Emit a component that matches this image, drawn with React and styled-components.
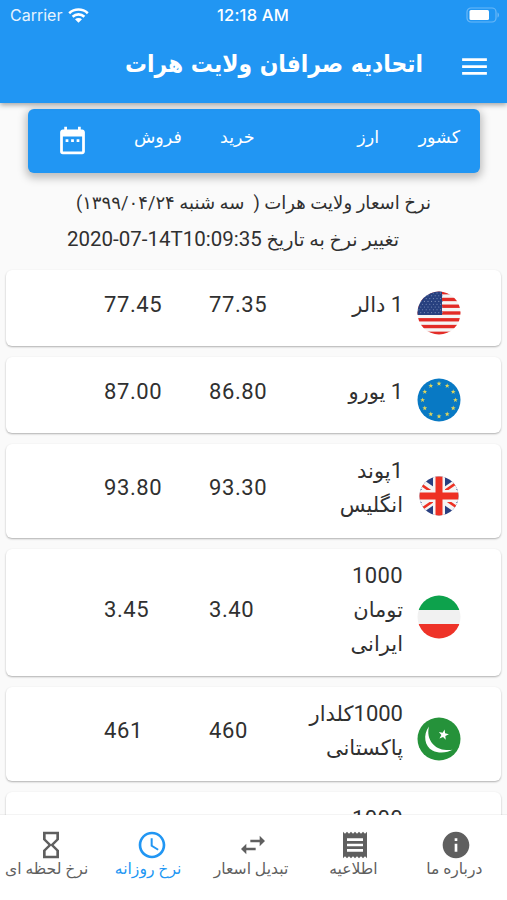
import styled, { createGlobalStyle } from "styled-components";
import {
  MdAccessTime,
  MdDateRange,
  MdHourglassEmpty,
  MdInfo,
  MdMenu,
  MdReceipt,
  MdSwapHoriz,
} from "react-icons/md";

const GlobalStyle = createGlobalStyle`
  * {
    box-sizing: border-box;
  }

  body {
    margin: 0;
    background-color: #fafafa;
    font-family: Roboto, "DejaVu Sans", sans-serif;
  }
`;

const Screen = styled.div`
  width: 507px;
  height: 900px;
  display: flex;
  flex-direction: column;
  overflow: hidden;
  background-color: #fafafa;
  color: #303030;
`;

const Top = styled.header`
  flex: none;
  height: 103px;
  background-color: #2196f3;
  color: #fff;
  box-shadow: 0 2px 5px rgba(0, 0, 0, 0.35);
  z-index: 1;
`;

const StatusBar = styled.div`
  height: 30px;
  padding: 0 7px 0 10px;
  display: grid;
  grid-template-columns: 207px 1fr auto;
  align-items: center;
  font-family: Inter, sans-serif;
  font-size: 16px;
`;

const Carrier = styled.div`
  display: flex;
  align-items: center;
  gap: 6px;
  color: #e6f3fe;
`;

const Clock = styled.div`
  font-size: 16.5px;
  font-weight: 500;
  letter-spacing: 0.2px;
`;

const AppBar = styled.div`
  height: 73px;
  padding-right: 16px;
  display: flex;
  align-items: center;
  justify-content: flex-end;
  gap: 35px;
`;

const Title = styled.h1`
  margin: 0;
  padding-bottom: 5px;
  font-family: "DejaVu Sans Condensed", "DejaVu Sans", sans-serif;
  font-size: 24.3px;
  font-stretch: condensed;
  font-weight: bold;
  line-height: 40px;
  white-space: nowrap;
`;

const List = styled.main`
  flex: 1;
  min-height: 0;
  overflow: hidden;
  display: flex;
  flex-direction: column;
`;

const HeadBar = styled.div`
  flex: none;
  height: 64px;
  margin: 6px 27px 0 28px;
  padding: 0 20px 0 28px;
  display: grid;
  grid-template-columns: 78px 86px 100px 59px 1fr;
  border-radius: 6px;
  background-color: #2196f3;
  color: #fff;
  box-shadow: 0 3px 9px 2px rgba(0, 0, 0, 0.25);

  svg {
    margin-top: 15px;
  }
`;

const HeadCell = styled.div`
  padding-top: 12px;
  font-size: 17.5px;
  line-height: 32px;
`;

const Info = styled.div`
  flex: none;
  height: 97px;
  padding-top: 12px;
  display: flex;
  flex-direction: column;
`;

const InfoLine = styled.p`
  margin: 0;
  padding-right: ${({ $right }) => $right}px;
  font-size: ${({ $size }) => $size}px;
  line-height: 36px;
  white-space: pre;
`;

const Latin = styled.bdi`
  font-size: 20.5px;
`;

const Card = styled.article`
  flex: none;
  min-height: 76px;
  margin: 0 6px 11px;
  padding: 10px 40.5px 15.5px 98px;
  display: grid;
  grid-template-columns: 105px 1fr 57.5px;
  align-items: center;
  border-radius: 6px;
  background-color: #fff;
  box-shadow: 0 1px 2px rgba(0, 0, 0, 0.3);
`;

const Price = styled.div`
  font-size: 22px;
  line-height: 34px;
  letter-spacing: 0.6px;
`;

const PriceName = styled.div`
  display: flex;
  justify-content: space-between;
  align-items: center;
`;

const Name = styled.div`
  font-size: 21px;
  line-height: 34px;
  text-align: right;
  white-space: pre;
`;

const NameLine = styled.div`
  height: 34px;
`;

const Amount = styled.span`
  font-size: 22px;
  letter-spacing: 0.4px;
`;

const Flag = styled.svg`
  justify-self: end;
  position: relative;
  top: 7.5px;
`;

const Nav = styled.nav`
  flex: none;
  height: 85px;
  padding-top: 14px;
  display: grid;
  grid-template-columns: repeat(5, 1fr);
  background-color: #fff;
  box-shadow: 0 0 1px rgba(0, 0, 0, 0.25);
  z-index: 1;
`;

const NavItem = styled.div`
  display: flex;
  flex-direction: column;
  align-items: center;
  color: ${({ $active }) => ($active ? "#2196f3" : "#5f5f5f")};
`;

const NavLabel = styled.span`
  margin-top: -4px;
  padding-right: ${({ $trail }) => $trail}px;
  font-size: 15.6px;
  line-height: 25px;
  white-space: nowrap;
`;

const star = (cx, cy, r, turn = 0) =>
  Array.from({ length: 10 }, (_, i) => {
    const a = ((i * 36 - 90 + turn) * Math.PI) / 180;
    const d = i % 2 ? r * 0.4 : r;
    return `${cx + d * Math.cos(a)},${cy + d * Math.sin(a)}`;
  }).join(" ");

const UsFlag = () => (
  <>
    <rect width="44" height="44" fill="#f5f5f5" />
    {[0, 1, 2, 3, 4, 5, 6].map((i) => (
      <rect key={i} y={i * 6.77} width="44" height="3.38" fill="#e32b26" />
    ))}
    <rect width="25" height="24" fill="#27407f" />
    {Array.from({ length: 56 }, (_, i) => {
      const row = Math.floor(i / 7);
      return (
        <circle
          key={i}
          cx={2 + (i % 7) * 3.6 + (row % 2) * 1.8}
          cy={2 + row * 2.8}
          r="0.55"
          fill="#8394bd"
        />
      );
    })}
  </>
);

const EuFlag = () => (
  <>
    <rect width="44" height="44" fill="#0879c4" />
    {Array.from({ length: 12 }, (_, i) => {
      const a = (i * Math.PI) / 6;
      return (
        <polygon
          key={i}
          points={star(22 + 16.4 * Math.cos(a), 22 + 16.4 * Math.sin(a), 2.6)}
          fill="#e0d55c"
        />
      );
    })}
  </>
);

const UkFlag = () => (
  <>
    <rect width="44" height="44" fill="#283f80" />
    <path d="M-4 4L48 40M-4 40L48 4" stroke="#f5f5f5" strokeWidth="9" />
    <path d="M-4 5L22 23M48 39L22 21M-4 41L22 23M48 3L22 21" stroke="#ee3124" strokeWidth="2.6" />
    <path d="M22 0V44M0 22H44" stroke="#f5f5f5" strokeWidth="12" />
    <path d="M22 0V44M0 22H44" stroke="#ee3124" strokeWidth="7" />
  </>
);

const IranFlag = () => (
  <>
    <rect width="44" height="44" fill="#f1f1f1" />
    <rect width="44" height="15" fill="#0da24c" />
    <rect y="29" width="44" height="15" fill="#ee3328" />
  </>
);

const PakistanFlag = () => (
  <>
    <rect width="44" height="44" fill="#25923a" />
    <path d="M12 9.5C5.5 18 7.8 29.5 15.5 33.5C22 37 31 35.5 35.5 32.8C29 33.5 21 33 15.8 27C11.3 21.5 10.5 15.5 12 9.5Z" fill="#fff" />
    <polygon points={star(26.5, 17.8, 5.4, 12)} fill="#fff" />
  </>
);

const rates = [
  { id: "usd", art: UsFlag, amount: "1", lines: [" دالر"], buy: "77.35", sell: "77.45", r: 21.5 },
  { id: "eur", art: EuFlag, amount: "1", lines: [" یورو"], buy: "86.80", sell: "87.00", r: 21.5 },
  { id: "gbp", art: UkFlag, amount: "1", lines: ["پوند", "انگلیس"], buy: "93.30", sell: "93.80", r: 19.5 },
  { id: "irr", art: IranFlag, amount: "1000", lines: ["", "تومان", "ایرانی"], buy: "3.40", sell: "3.45", r: 21.5 },
  { id: "pkr", art: PakistanFlag, amount: "1000", lines: ["کلدار", "پاکستانی"], buy: "460", sell: "461", r: 21.5 },
  { id: "next", amount: "1000", lines: ["", ""] },
];

const tabs = [
  { label: "نرخ لحظه ای", icon: MdHourglassEmpty, trail: 8 },
  { label: "نرخ روزانه", icon: MdAccessTime, active: true, trail: 8 },
  { label: "تبدیل اسعار", icon: MdSwapHoriz, trail: 5 },
  { label: "اطلاعیه", icon: MdReceipt, trail: 3 },
  { label: "درباره ما", icon: MdInfo, trail: 4 },
];

const RateCard = ({ rate }) => {
  const Art = rate.art;
  return (
    <Card>
      <Price>{rate.sell}</Price>
      <PriceName>
        <Price>{rate.buy}</Price>
        <Name dir="rtl">
          {rate.lines.map((line, i) => (
            <NameLine key={i}>
              {i === 0 && <Amount>{rate.amount}</Amount>}
              {line}
            </NameLine>
          ))}
        </Name>
      </PriceName>
      {Art && (
        <Flag width="44" height="44" viewBox="0 0 44 44">
          <clipPath id={`clip-${rate.id}`}>
            <circle cx="22" cy="22" r={rate.r} />
          </clipPath>
          <g clipPath={`url(#clip-${rate.id})`}>
            <Art />
          </g>
        </Flag>
      )}
    </Card>
  );
};

const App = () => (
  <Screen>
    <GlobalStyle />
    <Top>
      <StatusBar>
        <Carrier>
          Carrier
          <svg width="21" height="15" viewBox="0 0 21 15" fill="none" stroke="#fff" strokeWidth="2.6">
            <path d="M1.2 5.2C6.5 0.3 14.5 0.3 19.8 5.2" />
            <path d="M4.6 8.7C8 5.6 13 5.6 16.4 8.7" />
            <path d="M7 11.3C9 9.5 12 9.5 14 11.3L10.5 14.8Z" fill="#fff" stroke="none" />
          </svg>
        </Carrier>
        <Clock>12:18 AM</Clock>
        <svg width="34" height="17" viewBox="0 0 34 17">
          <rect x="1" y="1" width="29" height="14" rx="4" fill="none" stroke="#6bb8f7" strokeWidth="1.2" />
          <rect x="3.5" y="3" width="19.5" height="10" rx="1.5" fill="#fff" />
          <path d="M31.5 5.500C33.500 6 33.500 10 31.500 10.500Z" fill="#6bb8f7" />
        </svg>
      </StatusBar>
      <AppBar>
        <Title dir="rtl">اتحادیه صرافان ولایت هرات</Title>
        <MdMenu size={33} />
      </AppBar>
    </Top>
    <List>
      <HeadBar>
        <MdDateRange size={33} />
        <HeadCell>فروش</HeadCell>
        <HeadCell>خرید</HeadCell>
        <HeadCell dir="rtl">ارز</HeadCell>
        <HeadCell dir="rtl">کشور</HeadCell>
      </HeadBar>
      <Info dir="rtl">
        <InfoLine $right={76} $size={18.1}>
          {"نرخ اسعار ولایت هرات (  سه شنبه ۱۳۹۹/۰۴/۲۴)"}
        </InfoLine>
        <InfoLine $right={108} $size={19.1}>
          تغییر نرخ به تاریخ <Latin dir="ltr">2020-07-14T10:09:35</Latin>
        </InfoLine>
      </Info>
      {rates.map((rate) => (
        <RateCard key={rate.id} rate={rate} />
      ))}
    </List>
    <Nav>
      {tabs.map(({ label, icon: Icon, active, trail }) => (
        <NavItem key={label} $active={active}>
          <Icon size={32} />
          <NavLabel dir="rtl" $trail={trail}>{label}</NavLabel>
        </NavItem>
      ))}
    </Nav>
  </Screen>
);

export default App;
